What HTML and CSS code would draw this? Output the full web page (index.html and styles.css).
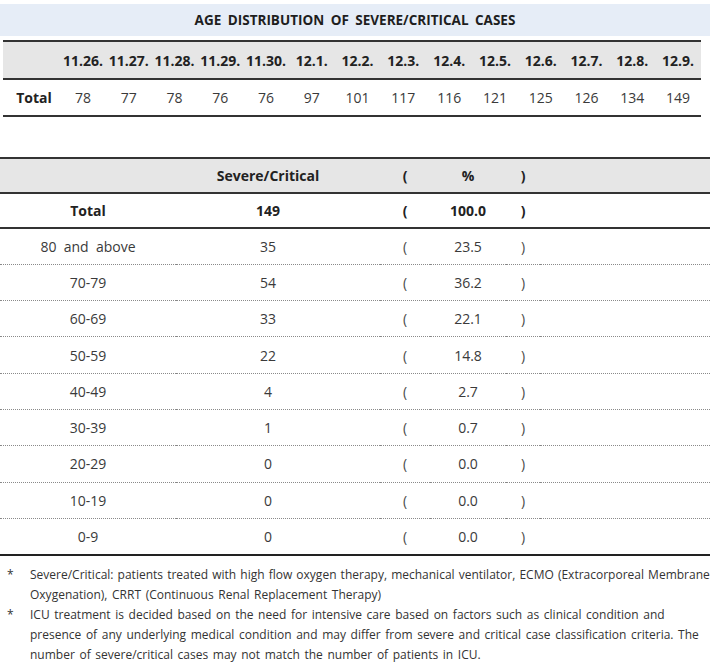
FILE: index.html
```html
<!DOCTYPE html>
<html>
<head>
<meta charset="utf-8">
<link rel="stylesheet" href="styles.css">
</head>
<body>
<div class="page">
  <div class="title">AGE DISTRIBUTION OF SEVERE/CRITICAL CASES</div>
  <table class="t1">
    <colgroup>
      <col class="c-first">
      <col span="14">
    </colgroup>
    <tr class="head">
      <td></td><td>11.26.</td><td>11.27.</td><td>11.28.</td><td>11.29.</td><td>11.30.</td><td>12.1.</td><td>12.2.</td><td>12.3.</td><td>12.4.</td><td>12.5.</td><td>12.6.</td><td>12.7.</td><td>12.8.</td><td>12.9.</td>
    </tr>
    <tr class="body">
      <td class="lbl">Total</td><td>78</td><td>77</td><td>78</td><td>76</td><td>76</td><td>97</td><td>101</td><td>117</td><td>116</td><td>121</td><td>125</td><td>126</td><td>134</td><td>149</td>
    </tr>
  </table>

  <table class="t2">
    <colgroup>
      <col class="w1"><col class="w2"><col class="w3"><col class="w4"><col class="w5"><col class="w6">
    </colgroup>
    <tr class="head">
      <td></td><td class="num">Severe/Critical</td><td>(</td><td>%</td><td>)</td><td></td>
    </tr>
    <tr class="total">
      <td>Total</td><td class="num">149</td><td>(</td><td>100.0</td><td>)</td><td></td>
    </tr>
    <tr><td>80&nbsp; and&nbsp; above</td><td class="num">35</td><td class="br">(</td><td>23.5</td><td class="br">)</td><td></td></tr>
    <tr><td>70-79</td><td class="num">54</td><td class="br">(</td><td>36.2</td><td class="br">)</td><td></td></tr>
    <tr><td>60-69</td><td class="num">33</td><td class="br">(</td><td>22.1</td><td class="br">)</td><td></td></tr>
    <tr><td>50-59</td><td class="num">22</td><td class="br">(</td><td>14.8</td><td class="br">)</td><td></td></tr>
    <tr><td>40-49</td><td class="num">4</td><td class="br">(</td><td>2.7</td><td class="br">)</td><td></td></tr>
    <tr><td>30-39</td><td class="num">1</td><td class="br">(</td><td>0.7</td><td class="br">)</td><td></td></tr>
    <tr><td>20-29</td><td class="num">0</td><td class="br">(</td><td>0.0</td><td class="br">)</td><td></td></tr>
    <tr><td>10-19</td><td class="num">0</td><td class="br">(</td><td>0.0</td><td class="br">)</td><td></td></tr>
    <tr class="last"><td>0-9</td><td class="num">0</td><td class="br">(</td><td>0.0</td><td class="br">)</td><td></td></tr>
  </table>

  <div class="notes">
    <div class="note"><span class="star">*</span><div class="lines"><span class="tight">Severe/Critical: patients treated with high flow oxygen therapy, mechanical ventilator, ECMO (Extracorporeal Membrane</span><span>Oxygenation), CRRT (Continuous Renal Replacement Therapy)</span></div></div>
    <div class="note"><span class="star">*</span><div class="lines"><span>ICU treatment is decided based on the need for intensive care based on factors such as clinical condition and</span><span>presence of any underlying medical condition and may differ from severe and critical case classification criteria. The</span><span>number of severe/critical cases may not match the number of patients in ICU.</span></div></div>
  </div>
</div>
</body>
</html>
```

FILE: styles.css
```css
* { box-sizing: border-box; }
html, body { margin: 0; padding: 0; background: #ffffff; }
body {
  font-family: "Open Sans", "Noto Sans", "Noto Sans CJK KR", sans-serif;
  color: #3a3a3a;
  font-size: 14px;
}
.page {
  width: 716px;
  padding-top: 4px;
}
.title {
  width: 710px;
  height: 32px;
  background: #e6edf7;
  color: #1e1e1e;
  font-weight: 700;
  font-size: 13.5px;
  word-spacing: 3px;
  display: flex;
  align-items: center;
  justify-content: center;
}
table {
  border-collapse: collapse;
  table-layout: fixed;
}
td { padding: 0; text-align: center; white-space: nowrap; }

.t1 {
  margin-top: 4px;
  margin-left: 3px;
  width: 698px;
  border-top: 2px solid #333;
}
.t1 .c-first { width: 57px; }
.t1 .head td {
  background: #e6e6e6;
  height: 38px;
  font-weight: 700;
  color: #222;
  border-bottom: 2px solid #333;
}
.t1 .body td {
  height: 37px;
  border-bottom: 2px solid #333;
}
.t1 .body td.lbl { font-weight: 700; color: #222; padding-left: 5px; }

.t2 {
  margin-top: 40px;
  width: 710px;
  border-top: 2px solid #333;
}
.t2 .w1 { width: 176px; }
.t2 .w2 { width: 204px; }
.t2 .w3 { width: 50px; }
.t2 .w4 { width: 76px; }
.t2 .w5 { width: 34px; }
.t2 .w6 { width: 170px; }
.t2 td.num { padding-right: 20px; }
.t2 td { height: 36.3px; border-bottom: 1px dotted #8a8a8a; }
.t2 .head td {
  background: #e6e6e6;
  height: 35px;
  font-weight: 700;
  color: #222;
  border-bottom: 2px solid #333;
}
.t2 .total td {
  height: 35px;
  font-weight: 700;
  color: #222;
  border-bottom: 2px solid #333;
}
.t2 .last td { border-bottom: 2px solid #222; }
.t2 td.br { color: #4a4a4a; }

.notes {
  margin-top: 9px;
  font-size: 12px;
  line-height: 20px;
  color: #333;
}
.note { display: flex; }
.star { width: 30px; padding-left: 7px; flex: none; }
.lines { display: flex; flex-direction: column; }
.lines span { white-space: nowrap; word-spacing: 1.5px; }
.lines span.tight { word-spacing: 1px; }
```
